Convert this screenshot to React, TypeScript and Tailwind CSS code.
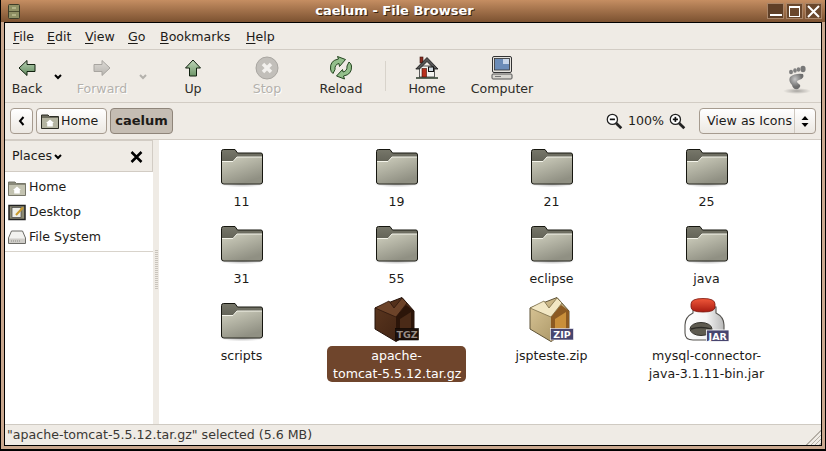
import React from "react";

const Folder = () => (
  <svg width="46" height="40" viewBox="0 0 46 40" className="block">
    <defs>
      <linearGradient id="fb" x1="0" y1="0" x2="0" y2="1"><stop offset="0" stopColor="#77776a" /><stop offset="1" stopColor="#3f3f36" /></linearGradient>
      <linearGradient id="ff" x1="0" y1="0" x2="0.5" y2="1"><stop offset="0" stopColor="#d0d0bf" /><stop offset="1" stopColor="#909083" /></linearGradient>
      <radialGradient id="fs"><stop offset="0" stopColor="#000" stopOpacity="0.3" /><stop offset="1" stopColor="#000" stopOpacity="0" /></radialGradient>
    </defs>
    <ellipse cx="23" cy="36" rx="23" ry="3.5" fill="url(#fs)" />
    <path d="M2.500 3.500 Q2.500 1.500 4.500 1.500 H16 L18.500 5 H42 Q43.500 5 43.500 7 V34 Q43.500 36 41 36 H5 Q2.500 36 2.500 34 Z" fill="url(#fb)" stroke="#16160f" strokeWidth="1" />
    <path d="M3 13.500 H14 L18 9 H43 V33.500 Q43 35.500 41 35.500 H5 Q3 35.500 3 33.500 Z" fill="url(#ff)" />
    <path d="M3 13.500 H14 L18 9 H43" fill="none" stroke="#f4f4ea" strokeWidth="1" />
  </svg>
);

const Box = ({ dark, label }: { dark?: boolean; label: string }) => (
  <svg width="50" height="46" viewBox="0 0 50 46" className="block">
    <defs>
      <linearGradient id={dark ? "b1" : "b2"} x1="0" y1="0" x2="1" y2="1">
        <stop offset="0" stopColor={dark ? "#5e3820" : "#ddc99a"} />
        <stop offset="1" stopColor={dark ? "#3a1f10" : "#a08c5c"} />
      </linearGradient>
    </defs>
    <path d="M3 12 L30 1.500 L42 15 L42 35 L24 45.500 L3 33 Z" fill={`url(#${dark ? "b1" : "b2"})`} stroke={dark ? "#24120a" : "#5f5336"} strokeWidth="1" />
    <path d="M3 12 L17 5 L22 12 L30 2 L35 7 L24 21 Z" fill={dark ? "#6c4329" : "#f2e7c4"} stroke={dark ? "#2d170c" : "#7b6d49"} strokeWidth="0.8" />
    <path d="M24 21 L34 9 L42 15 L42 35 L24 45 Z" fill={dark ? "#2c1509" : "#8c5a22"} />
    <path d="M28 23 L39 16 V32 L28 40 Z" fill={dark ? "#4a2a17" : "#c98f3a"} />
    <rect x="23.500" y="32.500" width="23" height="11.500" fill={dark ? "#1d100a" : "#47456f"} stroke={dark ? "#0b0503" : "#fff"} strokeWidth="0.6" />
    <text x="35" y="42" textAnchor="middle" fontFamily="'DejaVu Sans', sans-serif" fontWeight="700" fontSize="9.500" fill={dark ? "#9a8f88" : "#fff"}>{label}</text>
  </svg>
);

const Jar = () => (
  <svg width="50" height="48" viewBox="0 0 50 48" className="block">
    <defs>
      <linearGradient id="jl" x1="0" y1="0" x2="0" y2="1"><stop offset="0" stopColor="#f0583a" /><stop offset="1" stopColor="#a81a10" /></linearGradient>
      <linearGradient id="jg" x1="0" y1="0" x2="1" y2="0"><stop offset="0" stopColor="#ffffff" /><stop offset="0.55" stopColor="#f4f4f4" /><stop offset="1" stopColor="#b8b8b8" /></linearGradient>
    </defs>
    <path d="M11 13 V19 Q3 23 3 31 V39 Q3 46 11 46 H34 Q42 46 42 39 V31 Q42 23 34 19 V13 Z" fill="url(#jg)" stroke="#55534f" strokeWidth="1.100" />
    <path d="M9 10 Q9 4.500 21 4.500 Q33 4.500 33 10 V13 Q33 18 21 18 Q9 18 9 13 Z" fill="url(#jl)" stroke="#7a1208" strokeWidth="0.8" />
    <ellipse cx="19" cy="35" rx="11" ry="6.500" fill="#5e5b50" stroke="#34322c" />
    <path d="M9 35 Q19 32 29 35" stroke="#2b2a25" strokeWidth="1.400" fill="none" />
    <rect x="24.500" y="36" width="22.500" height="11.500" fill="#47456f" stroke="#fff" strokeWidth="0.8" />
    <text x="35.700" y="45.500" textAnchor="middle" fontFamily="'DejaVu Sans', sans-serif" fontWeight="700" fontSize="9.500" fill="#fff">JAR</text>
  </svg>
);

const Caret = ({ c = "#000" }: { c?: string }) => (
  <svg width="8" height="6" viewBox="0 0 8 6"><path d="M1 1 L4 4 L7 1" fill="none" stroke={c} strokeWidth="2" /></svg>
);

const ArrowLeft = ({ gray, flip }: { gray?: boolean; flip?: boolean }) => (
  <svg width="18" height="18" viewBox="0 0 18 18" style={flip ? { transform: "scaleX(-1)" } : undefined}>
    <defs><linearGradient id={gray ? "ag" : "ac"} x1="0" y1="0" x2="0" y2="1"><stop offset="0" stopColor={gray ? "#dedbd6" : "#b9d1b3"} /><stop offset="1" stopColor={gray ? "#b7b4af" : "#5f8a5c"} /></linearGradient></defs>
    <path d="M1 9 L9 1.500 V5.500 H17 V12.500 H9 V16.500 Z" fill={`url(#${gray ? "ag" : "ac"})`} stroke={gray ? "#a8a5a0" : "#10200f"} strokeWidth="1" strokeLinejoin="round" />
  </svg>
);
const ArrowUp = () => (
  <svg width="18" height="18" viewBox="0 0 18 18">
    <defs><linearGradient id="au" x1="0" y1="0" x2="0" y2="1"><stop offset="0" stopColor="#c0d7ba" /><stop offset="1" stopColor="#6d9668" /></linearGradient></defs>
    <path d="M9 1 L16.500 9 H12.500 V17 H5.500 V9 H1.500 Z" fill="url(#au)" stroke="#10200f" strokeWidth="1" strokeLinejoin="round" />
  </svg>
);
const Stop = () => (
  <svg width="24" height="24" viewBox="0 0 24 24">
    <circle cx="12" cy="12" r="11" fill="#c2bfba" stroke="#a9a6a1" />
    <path d="M8 8 L16 16 M16 8 L8 16" stroke="#f3f1ee" strokeWidth="3.500" />
  </svg>
);
const Reload = () => (
  <svg width="24" height="24" viewBox="0 0 24 24">
    <path d="M1.500 13 Q0.800 4.500 9.500 3 L8.500 .5 L16.500 3.500 L10.500 10.500 L10 7.500 Q5.500 8.500 6 13.500 L4 17.500 Q1.800 16 1.500 13 Z" fill="#93bf8b" stroke="#23451f" strokeWidth="1" strokeLinejoin="round" />
    <path d="M22.500 10 Q23.200 18.500 14.500 20 L15.500 23 L7.500 20 L13.500 13.500 L14 16 Q18.500 15 18 10 L20 6 Q22.200 7.500 22.500 10 Z" fill="#93bf8b" stroke="#23451f" strokeWidth="1" strokeLinejoin="round" />
  </svg>
);
const House = () => (
  <svg width="24" height="24" viewBox="0 0 24 24">
    <rect x="5" y="1" width="3" height="6" fill="#8a2d20" stroke="#3a120c" strokeWidth="0.6" />
    <rect x="4.500" y="10" width="15" height="11" fill="#f4f4f0" stroke="#333" strokeWidth="0.8" />
    <path d="M0.800 13 L12 1.500 L23 13 L19.500 13 L12 5.500 L4.500 13 Z" fill="#555" stroke="#111" strokeWidth="0.8" />
    <rect x="7" y="12.500" width="4.500" height="8.500" fill="#b8301c" stroke="#401008" strokeWidth="0.6" />
    <rect x="13.500" y="11" width="5" height="4.500" fill="#cfd8df" stroke="#111" strokeWidth="1" />
    <path d="M1 22 H23" stroke="#2a3a28" strokeWidth="1.500" />
  </svg>
);
const Computer = () => (
  <svg width="24" height="24" viewBox="0 0 24 24">
    <rect x="2.500" y="0.500" width="19" height="16" rx="1.500" fill="#e6e4df" stroke="#333" />
    <rect x="4.500" y="2.500" width="15" height="11.500" fill="#6b8cb8" stroke="#333" strokeWidth="0.8" />
    <rect x="13" y="3" width="6" height="5" fill="#c7d6ea" />
    <rect x="2" y="18" width="20" height="5" rx="1" fill="#d8d6d0" stroke="#555" />
    <path d="M5 20.500 H11" stroke="#777" />
  </svg>
);
const Foot = () => (
  <svg width="28" height="30" viewBox="0 0 28 30">
    <defs><radialGradient id="ft" cx="0.400" cy="0.350"><stop offset="0" stopColor="#c6c6c6" /><stop offset="1" stopColor="#6e6e6e" /></radialGradient>
    <radialGradient id="fsh"><stop offset="0" stopColor="#000" stopOpacity="0.3" /><stop offset="1" stopColor="#000" stopOpacity="0" /></radialGradient></defs>
    <ellipse cx="14" cy="26" rx="14" ry="3" fill="url(#fsh)" />
    <ellipse cx="8" cy="7" rx="2" ry="2.200" fill="#808080" />
    <ellipse cx="12" cy="5.500" rx="1.800" ry="2.300" fill="#808080" />
    <ellipse cx="15.500" cy="4.500" rx="1.800" ry="2.300" fill="#808080" />
    <ellipse cx="20" cy="4" rx="2.600" ry="3.200" fill="#777" />
    <path d="M7 12 Q12 8 20 9 Q22 13 16 15 Q12 16 16 19 Q19 21 15 24 Q10 25 9 20 Q5 16 7 12 Z" fill="url(#ft)" />
  </svg>
);
const Magnifier = ({ plus }: { plus?: boolean }) => (
  <svg width="17" height="17" viewBox="0 0 20 20">
    <circle cx="7.500" cy="7.500" r="6" fill="#fff" stroke="#222" strokeWidth="1.500" />
    <path d="M4.500 7.500 H10.500" stroke="#111" strokeWidth="2" />
    {plus && <path d="M7.500 4.500 V10.500" stroke="#111" strokeWidth="2" />}
    <path d="M12 12 L18 18" stroke="#222" strokeWidth="3.200" />
  </svg>
);
const MiniHome = ({ light }: { light?: boolean }) => (
  <svg width="18" height="16" viewBox="0 0 18 16">
    <path d="M.5 2 H7 L8.500 3.500 H17.500 V15.500 H.5 Z" fill={light ? "#8a8a7a" : "#6c6c5e"} stroke={light ? "#77776a" : "#2e2e26"} />
    <rect x="1" y="5" width="16" height="10" fill={light ? "#c3c3b1" : "#b5b5a2"} />
    <path d="M9 6.500 L13 10 H11.800 V13.500 H6.200 V10 H5 Z" fill="#fff" />
  </svg>
);
const Desktop = () => (
  <svg width="18" height="17" viewBox="0 0 18 17">
    <rect x="1" y="1.500" width="16" height="14" fill="#8d8b74" stroke="#222" strokeWidth="1.500" />
    <rect x="4" y="3.500" width="9" height="10" fill="#efefe8" stroke="#444" strokeWidth="0.7" />
    <path d="M8 11 L15 3.500" stroke="#c99a2c" strokeWidth="2" />
  </svg>
);
const Disk = () => (
  <svg width="18" height="15" viewBox="0 0 18 15">
    <path d="M3.500 1 H14.500 L17.500 8 V13.500 H.5 V8 Z" fill="#f2f2ef" stroke="#6b6b66" />
    <path d="M1 8.500 H17 V13 H1 Z" fill="#cfcdc8" />
    <path d="M3 11 H12" stroke="#8a8a85" strokeDasharray="1 1" />
  </svg>
);

const Mn = ({ k, r }: { k: string; r: string }) => (
  <span><span className="underline underline-offset-2">{k}</span>{r}</span>
);

const Tool = ({ w, icon, label, dim }: { w: string; icon: React.ReactNode; label: string; dim?: boolean }) => (
  <div className={`${w} flex flex-col items-center shrink-0`}>
    <div className="h-[26px] flex items-center justify-center">{icon}</div>
    <div className={`leading-[15px] whitespace-nowrap ${dim ? "text-[#b4b1ac] [text-shadow:1px_1px_0_#fff]" : "text-[#2e2c28]"}`}>{label}</div>
  </div>
);

const items: { name: React.ReactNode; icon: React.ReactNode; sel?: boolean }[] = [
  { name: "11", icon: <Folder /> },
  { name: "19", icon: <Folder /> },
  { name: "21", icon: <Folder /> },
  { name: "25", icon: <Folder /> },
  { name: "31", icon: <Folder /> },
  { name: "55", icon: <Folder /> },
  { name: "eclipse", icon: <Folder /> },
  { name: "java", icon: <Folder /> },
  { name: "scripts", icon: <Folder /> },
  { name: <>apache-<br />tomcat-5.5.12.tar.gz</>, icon: <Box dark label="TGZ" />, sel: true },
  { name: "jspteste.zip", icon: <Box label="ZIP" /> },
  { name: <>mysql-connector-<br />java-3.1.11-bin.jar</>, icon: <Jar /> },
];

export default function App() {
  return (
    <div className="w-[826px] h-[451px] bg-[#c9a78e] overflow-hidden flex flex-col border-l border-r border-b-2 border-black font-['DejaVu_Sans',sans-serif] text-[12.6px] text-[#1d1b18]">
      <div className="h-[22px] shrink-0 flex items-center bg-gradient-to-b from-[#c58e62] to-[#7c5231] pl-[7px] relative">
        <svg width="12" height="15" viewBox="0 0 12 15">
          <rect x=".5" y=".5" width="11" height="14" rx="1" fill="#8f9064" stroke="#3d3d28" />
          <path d="M1 7.500 H11" stroke="#4d4d30" />
          <path d="M4 4 H8 M4 11 H8" stroke="#d5d5a8" />
        </svg>
        <div className="flex-1 text-center text-[13px] font-bold text-white [text-shadow:1px_1px_0_#3c2614] pl-[2px]">caelum - File Browser</div>
        <div className="flex gap-[2px] mr-[3px]">
          <div className="w-[17px] h-[16px] border border-[#a98568] bg-[#5f3f27] flex items-end justify-center pb-[2px]"><div className="w-[12px] h-[2px] bg-white" /></div>
          <div className="w-[17px] h-[16px] border border-[#a98568] bg-[#6a472c] flex items-center justify-center"><div className="w-[11px] h-[11px] border border-white border-t-2" /></div>
          <div className="w-[17px] h-[16px] border border-[#a98568] bg-[#6a472c] flex items-center justify-center">
            <svg width="13" height="13" viewBox="0 0 13 13"><path d="M1 1 L12 12 M12 1 L1 12" stroke="#fff" strokeWidth="2" /></svg>
          </div>
        </div>
      </div>
      <div className="mx-[3px] flex-1 min-h-0 border-x border-y border-black bg-[#efebe5] flex flex-col">
        <div className="h-[27px] shrink-0 flex items-center pl-[8px] pt-[2px] border-b border-[#d2ccc4]">
          <span className="w-[34px]"><Mn k="F" r="ile" /></span>
          <span className="w-[38px]"><Mn k="E" r="dit" /></span>
          <span className="w-[43px]"><Mn k="V" r="iew" /></span>
          <span className="w-[32px]"><Mn k="G" r="o" /></span>
          <span className="w-[86px]"><Mn k="B" r="ookmarks" /></span>
          <Mn k="H" r="elp" />
        </div>
        <div className="h-[53px] shrink-0 flex items-start pt-[5px] border-b border-[#d2ccc4] relative">
          <Tool w="w-[44px]" icon={<ArrowLeft />} label="Back" />
          <div className="w-[18px] flex justify-center pt-[19px]"><Caret /></div>
          <Tool w="w-[70px]" icon={<ArrowLeft gray flip />} label="Forward" dim />
          <div className="w-[12px] flex justify-center pt-[19px]"><Caret c="#b4b1ac" /></div>
          <div className="w-[7px]" />
          <Tool w="w-[74px]" icon={<ArrowUp />} label="Up" />
          <Tool w="w-[74px]" icon={<Stop />} label="Stop" dim />
          <Tool w="w-[74px]" icon={<Reload />} label="Reload" />
          <div className="w-[14px] flex justify-center pt-[6px]"><div className="w-px h-[30px] bg-[#d8d3cb]" /></div>
          <Tool w="w-[70px]" icon={<House />} label="Home" />
          <Tool w="w-[80px]" icon={<Computer />} label="Computer" />
          <div className="flex-1" />
          <div className="mr-[10px] mt-[10px]"><Foot /></div>
        </div>
        <div className="h-[37px] shrink-0 flex items-center pl-[5px] pr-[5px] border-b border-[#d2ccc4]">
          <div className="w-[23px] h-[26px] rounded-[4px] border border-[#a69b8f] bg-gradient-to-b from-white to-[#ece8e2] flex items-center justify-center">
            <svg width="7" height="10" viewBox="0 0 7 10"><path d="M5.500 1 L2 5 L5.500 9" fill="none" stroke="#000" strokeWidth="2" /></svg>
          </div>
          <div className="ml-[3px] w-[71px] h-[26px] rounded-[4px] border border-[#a69b8f] bg-gradient-to-b from-white to-[#ece8e2] flex items-center pl-[4px] gap-[2px]">
            <MiniHome />
            <span className="pt-[1px]">Home</span>
          </div>
          <div className="ml-[3px] w-[63px] h-[26px] rounded-[4px] border border-[#8f857a] bg-[#c5bdb3] flex items-center justify-center font-bold text-[13px]">caelum</div>
          <div className="flex-1" />
          <Magnifier />
          <span className="ml-[5px] mr-[5px] pt-[1px]">100%</span>
          <Magnifier plus />
          <div className="ml-[13px] w-[117px] h-[26px] rounded-[4px] border border-[#a69b8f] bg-gradient-to-b from-white to-[#ece8e2] flex items-center">
            <span className="flex-1 pl-[7px] pt-[1px] whitespace-nowrap">View as Icons</span>
            <div className="w-[21px] h-full border-l border-[#cfc9c0] flex items-center justify-center">
              <svg width="8" height="13" viewBox="0 0 8 13"><path d="M4 1 L7.500 5 H.5 Z M4 12 L7.500 8 H.5 Z" fill="#000" /></svg>
            </div>
          </div>
        </div>
        <div className="flex-1 min-h-0 flex">
          <div className="w-[148px] shrink-0 bg-white flex flex-col">
            <div className="h-[32px] shrink-0 bg-[#efebe5] border-b border-r border-[#d2ccc4] border-t flex items-center pl-[7px] pr-[9px] pt-[1px]">
              <span>Places</span>
              <span className="ml-[2px] mt-[1px]"><Caret /></span>
              <div className="flex-1" />
              <svg width="13" height="12" viewBox="0 0 13 12"><path d="M1.500 1 L11.500 11 M11.500 1 L1.500 11" stroke="#000" strokeWidth="2.500" /></svg>
            </div>
            <div className="h-[75px] shrink-0 mt-[3px] flex flex-col">
              <div className="h-[25px] flex items-center"><div className="w-[24px] pl-[3px]"><MiniHome light /></div>Home</div>
              <div className="h-[25px] flex items-center"><div className="w-[24px] pl-[3px]"><Desktop /></div>Desktop</div>
              <div className="h-[25px] flex items-center"><div className="w-[24px] pl-[3px]"><Disk /></div>File System</div>
            </div>
            <div className="h-[2px] mt-[1px] border-t border-[#d8d3cb]" />
          </div>
          <div className="w-[6px] shrink-0 flex flex-col items-center justify-center pb-[24px]">
            <div className="w-[3px] h-[40px] bg-[repeating-linear-gradient(to_bottom,#c9c4bc_0,#c9c4bc_1px,transparent_1px,transparent_2px)]" />
          </div>
          <div className="flex-1 min-w-0 bg-white pl-[5px] pt-[2px] grid grid-cols-[repeat(4,155px)] auto-rows-[77px] content-start">
            {items.map((it, i) => (
              <div key={i} className="flex flex-col items-center">
                <div className="h-[46px] flex items-end justify-center">{it.icon}</div>
                <div className={`mt-[4px] pt-[1px] text-center leading-[18px] whitespace-nowrap ${it.sel ? "bg-[#6f452c] text-white rounded-[5px] px-[6px] w-[139px] h-[36px]" : "px-[2px]"}`}>{it.name}</div>
              </div>
            ))}
          </div>
        </div>
        <div className="h-[21px] shrink-0 border-t border-[#cfcac2] flex items-center pl-[2px] relative text-[#3a3834]">
          {'"apache-tomcat-5.5.12.tar.gz" selected (5.6 MB)'}
          <div className="absolute right-0 bottom-0 w-[16px] h-[16px] [clip-path:polygon(100%_0,100%_100%,0_100%)] bg-[repeating-linear-gradient(135deg,#b5afa6_0,#b5afa6_1px,transparent_1px,transparent_3px)]" />
        </div>
      </div>
      <div className="h-[3px] shrink-0" />
    </div>
  );
}
